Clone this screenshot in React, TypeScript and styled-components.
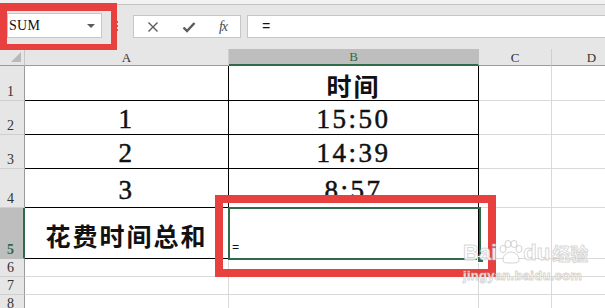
import React from "react";
import styled, { createGlobalStyle } from "styled-components";

const GlobalStyle = createGlobalStyle`
  html, body { margin: 0; padding: 0; background: #fff; overflow: hidden; }
  body { font-family: "Liberation Sans", Arial, sans-serif; }
`;

const Window = styled.div`
  position: relative;
  width: 605px;
  height: 308px;
  overflow: hidden;
  background: #fff;
`;

const TopStrip = styled.div`
  height: 4px;
  background: #f2f2f2;
  border-bottom: 1px solid #c4c4c4;
`;

const Toolbar = styled.div`
  box-sizing: border-box;
  height: 44px;
  background: #e6e6e6;
  display: flex;
  align-items: flex-start;
  padding: 8px 0 0 7px;
`;

const NameBox = styled.div`
  box-sizing: border-box;
  width: 95px;
  height: 25px;
  background: #fff;
  border: 1px solid #c6c6c6;
  display: flex;
  align-items: center;
  justify-content: space-between;
  padding: 0 6px 0 1px;
  font-family: "Liberation Serif", serif;
  font-size: 14px;
  letter-spacing: 0.3px;
  color: #111;
`;

const Caret = styled.span`
  width: 0;
  height: 0;
  border-left: 4px solid transparent;
  border-right: 4px solid transparent;
  border-top: 4px solid #5a5a5a;
`;

const Grip = styled.div`
  margin: 8px 0 0 14px;
  display: flex;
  flex-direction: column;
  gap: 2px;
  span {
    width: 2px;
    height: 2px;
    background: #8a7070;
  }
`;

const FxGroup = styled.div`
  box-sizing: border-box;
  margin: 2px 0 0 15px;
  width: 108px;
  height: 23px;
  background: #fff;
  border: 1px solid #c6c6c6;
  display: grid;
  grid-template-columns: 37px 35px 1fr;
  align-items: center;
  justify-items: center;
  color: #5a5a5a;
`;

const FxText = styled.span`
  font-family: "Liberation Serif", serif;
  font-style: italic;
  font-size: 14px;
  letter-spacing: -1px;
  color: #4a4a4a;
`;

const FormulaBox = styled.div`
  box-sizing: border-box;
  flex: 1;
  margin: 2px 0 0 6px;
  height: 23px;
  background: #fff;
  border: 1px solid #c6c6c6;
  border-right: none;
  display: flex;
  align-items: center;
  padding-left: 14px;
  font-family: "Liberation Mono", monospace;
  font-size: 14px;
  color: #111;
`;

const Sheet = styled.div`
  display: grid;
  grid-template-columns: 25px 204px 250px 73px 80px;
  grid-template-rows: 17px 35px 34px 34px 39px 51px 18px 18px 18px;
`;

const Corner = styled.div`
  box-sizing: border-box;
  position: relative;
  background: #e6e6e6;
  border-right: 1px solid #c6c6c6;
  border-bottom: 1px solid #9b9b9b;
  &::after {
    content: "";
    position: absolute;
    right: 3px;
    bottom: 3px;
    border-left: 10px solid transparent;
    border-bottom: 10px solid #b9b9b9;
  }
`;

const ColHeader = styled.div<{ $active?: boolean }>`
  box-sizing: border-box;
  background: ${(p) => (p.$active ? "#bebebe" : "#e6e6e6")};
  border-right: 1px solid ${(p) => (p.$active ? "#bebebe" : "#cfcfcf")};
  border-bottom: ${(p) => (p.$active ? "2px solid #2f6b48" : "1px solid #9b9b9b")};
  display: flex;
  align-items: flex-end;
  justify-content: center;
  padding-bottom: 1px;
  font-family: "Liberation Serif", serif;
  font-size: 13px;
  line-height: 13px;
  color: ${(p) => (p.$active ? "#2f6b48" : "#333")};
`;

const RowHeader = styled.div<{ $active?: boolean }>`
  box-sizing: border-box;
  background: ${(p) => (p.$active ? "#bebebe" : "#e6e6e6")};
  border-right: ${(p) => (p.$active ? "2px solid #2f6b48" : "1px solid #9b9b9b")};
  border-bottom: 1px solid ${(p) => (p.$active ? "#bebebe" : "#cfcfcf")};
  display: flex;
  align-items: flex-end;
  padding: 0 0 1px 7px;
  font-family: "Liberation Serif", serif;
  font-size: 14px;
  line-height: 14px;
  font-weight: ${(p) => (p.$active ? 700 : 400)};
  color: ${(p) => (p.$active ? "#2f6b48" : "#333")};
`;

const Cell = styled.div<{ $boxed?: boolean; $cjk?: boolean }>`
  box-sizing: border-box;
  border-right: 1px solid ${(p) => (p.$boxed ? "#000" : "#d9d9d9")};
  border-bottom: 1px solid ${(p) => (p.$boxed ? "#000" : "#d9d9d9")};
  display: flex;
  align-items: center;
  justify-content: center;
  padding-top: 4px;
  white-space: nowrap;
  color: #111;
  font-family: ${(p) =>
    p.$cjk
      ? '"Noto Sans CJK SC", "Noto Sans", sans-serif'
      : '"Liberation Serif", "Times New Roman", serif'};
  font-size: ${(p) => (p.$cjk ? "25px" : "27px")};
  font-weight: ${(p) => (p.$cjk ? 700 : 400)};
  letter-spacing: ${(p) => (p.$cjk ? "2px" : "2.5px")};
  -webkit-text-stroke: ${(p) => (p.$cjk ? "0" : "0.5px #111")};
  line-height: 1;
`;

const EditCell = styled(Cell)`
  justify-content: flex-start;
  align-items: flex-end;
  padding: 0 0 4px 3px;
  font-family: "Liberation Mono", monospace;
  font-size: 12px;
  letter-spacing: 0;
  -webkit-text-stroke: 0;
`;

const RedFrame = styled.div`
  position: absolute;
  box-sizing: border-box;
  border: 7px solid #e8403e;
  pointer-events: none;
`;

const NameHighlight = styled(RedFrame)`
  left: 0;
  top: 3px;
  width: 117px;
  height: 47px;
  border-width: 8px 6px 6px 7px;
`;

const CellHighlight = styled(RedFrame)`
  left: 215px;
  top: 195px;
  width: 281px;
  height: 82px;
  border-width: 8px;
`;

const Selection = styled.div`
  position: absolute;
  box-sizing: border-box;
  left: 228px;
  top: 207px;
  width: 253px;
  height: 53px;
  border: 2px solid #2f6b48;
  &::after {
    content: "";
    position: absolute;
    right: -5px;
    bottom: -5px;
    width: 5px;
    height: 5px;
    background: #2f6b48;
    border: 1px solid #fff;
  }
`;

const Watermark = styled.div`
  position: absolute;
  left: 463px;
  top: 240px;
  display: flex;
  flex-direction: column;
  align-items: flex-start;
  color: rgba(255, 255, 255, 0.9);
  -webkit-text-stroke: 1px rgba(175, 175, 175, 0.5);
  font-family: "Liberation Sans", Arial, sans-serif;
  pointer-events: none;
`;

const MarkLine = styled.div`
  display: flex;
  align-items: flex-end;
  font-size: 22px;
  font-weight: 700;
  line-height: 22px;
  span.cn {
    font-family: "Noto Sans CJK SC", sans-serif;
    font-size: 18px;
    margin-left: 2px;
  }
`;

const MarkUrl = styled.div`
  margin-top: 4px;
  font-size: 13px;
  font-weight: 700;
  letter-spacing: 0.3px;
`;

const rows = [
  { n: "1", a: "", b: "时间", cjkB: true },
  { n: "2", a: "1", b: "15:50" },
  { n: "3", a: "2", b: "14:39" },
  { n: "4", a: "3", b: "8:57" },
];

function Paw() {
  return (
    <svg width="26" height="24" viewBox="0 0 26 24" fill="rgba(255,255,255,0.9)" stroke="rgba(175,175,175,0.55)" strokeWidth="1">
      <ellipse cx="6" cy="9" rx="3" ry="3.6" />
      <ellipse cx="11" cy="4" rx="3" ry="3.6" />
      <ellipse cx="17" cy="4" rx="3" ry="3.6" />
      <ellipse cx="22" cy="9" rx="3" ry="3.6" />
      <path d="M6 20c0-5 4-8 8-8s8 3 8 8c0 3-3 3-8 3s-8 0-8-3z" />
    </svg>
  );
}

export default function App() {
  return (
    <Window>
      <GlobalStyle />
      <TopStrip />
      <Toolbar>
        <NameBox>
          <span>SUM</span>
          <Caret />
        </NameBox>
        <Grip>
          <span />
          <span />
          <span />
        </Grip>
        <FxGroup>
          <svg width="12" height="12" viewBox="0 0 12 12">
            <path d="M1.5 1.5l9 9M10.5 1.5l-9 9" stroke="#5a5a5a" strokeWidth="1.4" />
          </svg>
          <svg width="14" height="12" viewBox="0 0 14 12">
            <path d="M1.5 6.5l3.5 3.5 7.5-8" stroke="#5a5a5a" strokeWidth="2.4" fill="none" />
          </svg>
          <FxText>fx</FxText>
        </FxGroup>
        <FormulaBox>=</FormulaBox>
      </Toolbar>

      <Sheet>
        <Corner />
        <ColHeader>A</ColHeader>
        <ColHeader $active>B</ColHeader>
        <ColHeader>C</ColHeader>
        <ColHeader>D</ColHeader>

        {rows.map((r) => (
          <React.Fragment key={r.n}>
            <RowHeader>{r.n}</RowHeader>
            <Cell $boxed>{r.a}</Cell>
            <Cell $boxed $cjk={r.cjkB}>{r.b}</Cell>
            <Cell />
            <Cell />
          </React.Fragment>
        ))}

        <RowHeader $active>5</RowHeader>
        <Cell $boxed $cjk>花费时间总和</Cell>
        <EditCell $boxed>=</EditCell>
        <Cell />
        <Cell />

        {["6", "7", "8"].map((n) => (
          <React.Fragment key={n}>
            <RowHeader>{n}</RowHeader>
            <Cell />
            <Cell />
            <Cell />
            <Cell />
          </React.Fragment>
        ))}
      </Sheet>

      <Selection />
      <NameHighlight />
      <CellHighlight />
      <Watermark>
        <MarkLine>
          <span>Bai</span>
          <Paw />
          <span>du</span>
          <span className="cn">经验</span>
        </MarkLine>
        <MarkUrl>jingyan.baidu.com</MarkUrl>
      </Watermark>
    </Window>
  );
}
